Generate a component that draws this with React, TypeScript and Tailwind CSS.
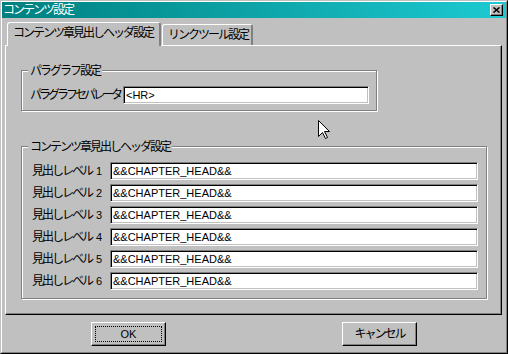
import React from "react";

const face = "font-['Liberation_Sans','Noto_Sans_CJK_JP',sans-serif]";

// sunken edit box, win9x style
function Field({ value, w }: { value: string; w: string }) {
  return (
    <div
      className={`${w} flex h-[18px] items-center overflow-hidden whitespace-nowrap border border-[#808080] border-r-white border-b-white bg-white pl-[2px] text-[11px] leading-none text-black shadow-[inset_1px_1px_0_#000,inset_-1px_-1px_0_#c0c0c0]`}
    >
      {value}
    </div>
  );
}

function Button({ children, focused }: { children: React.ReactNode; focused?: boolean }) {
  return (
    <div className="flex h-[24px] w-[75px] border border-white border-r-black border-b-black p-[3px] shadow-[inset_-1px_-1px_0_#808080]">
      <div
        className={`flex flex-1 items-center justify-center border ${
          focused ? "border-dotted border-black" : "border-transparent"
        }`}
      >
        {children}
      </div>
    </div>
  );
}

function Group({
  title,
  w,
  h,
  className,
  children,
}: {
  title: string;
  w: string;
  h: string;
  className: string;
  children: React.ReactNode;
}) {
  return (
    <div
      className={`${w} ${h} ${className} relative border border-[#808080] shadow-[inset_1px_1px_0_#fff,1px_1px_0_#fff]`}
    >
      <span className="absolute -top-[7px] left-[6px] bg-[#c0c0c0] px-[2px] text-[12px] leading-[14px] tracking-[-2px]">
        {title}
      </span>
      {children}
    </div>
  );
}

const levels = [1, 2, 3, 4, 5, 6];

export default function App() {
  return (
    <div
      className={`${face} relative h-[354px] w-[508px] select-none border border-[#c0c0c0] border-r-black border-b-black bg-[#c0c0c0] text-black`}
    >
      <div className="flex h-full flex-col border border-white border-r-[#808080] border-b-[#808080]">
        {/* title bar */}
        <div className="flex h-[16px] shrink-0 items-center justify-between bg-linear-to-r from-[#008080] to-[#1ccad2]">
          <span className="pl-[1px] text-[12px] leading-[16px] tracking-[-2px] text-white">
            コンテンツ設定
          </span>
          <div className="mr-[3px] flex h-[12px] w-[13px] items-center justify-center border border-white border-r-black border-b-black bg-[#c0c0c0] shadow-[inset_-1px_-1px_0_#808080]">
            <svg width="7" height="6" viewBox="0 0 7 6">
              <path d="M0.5 0.5 L6.5 5.5 M6.5 0.5 L0.5 5.5" stroke="#000" strokeWidth="1.6" />
            </svg>
          </div>
        </div>

        {/* tabs */}
        <div className="flex h-[27px] shrink-0 items-end pl-[5px] text-[12px] leading-[14px]">
          <div className="relative z-10 -mb-px h-[24px] w-[154px] rounded-t-[3px] border-t border-l border-r-2 border-white border-r-[#808080] bg-[#c0c0c0] pt-[3px] pl-[5px] tracking-[-2px]">
            コンテンツ章見出しヘッダ設定
          </div>
          <div className="ml-[1px] h-[21px] w-[91px] rounded-t-[3px] border-t border-l border-r-2 border-white border-r-[#808080] pt-[3px] pl-[5px] tracking-[-2px]">
            リンクツール設定
          </div>
        </div>

        {/* tab panel */}
        <div className="ml-[3px] h-[270px] w-[497px] shrink-0 border border-white border-r-black border-b-black shadow-[inset_-1px_-1px_0_#808080]">
          <Group title="パラグラフ設定" w="w-[356px]" h="h-[41px]" className="mt-[24px] ml-[15px]">
            <div className="flex items-center pt-[15px] pl-[8px]">
              <span className="w-[93px] text-[12px] leading-[14px] tracking-[-3px]">パラグラフセパレータ</span>
              <Field value="<HR>" w="w-[246px]" />
            </div>
          </Group>

          <Group
            title="コンテンツ章見出しヘッダ設定"
            w="w-[466px]"
            h="h-[153px]"
            className="mt-[35px] ml-[15px]"
          >
            <div className="flex flex-col gap-[4px] pt-[15px] pl-[10px]">
              {levels.map((n) => (
                <div key={n} className="flex items-center">
                  <span className="flex w-[78px] items-center text-[12px] leading-[14px]">
                    <span className="tracking-[-2px]">見出しレベル</span>
                    <span className="ml-[4px] text-[11px]">{n}</span>
                  </span>
                  <Field value="&&CHAPTER_HEAD&&" w="w-[368px]" />
                </div>
              ))}
            </div>
          </Group>
        </div>

        {/* buttons */}
        <div className="mt-[7px] flex gap-[176px] pl-[89px] text-[11px] leading-none">
          <Button focused>OK</Button>
          <Button>
            <span className="text-[12px] tracking-[-2px]">キャンセル</span>
          </Button>
        </div>
      </div>

      {/* mouse pointer */}
      <svg className="absolute top-[119px] left-[317px]" width="12" height="19" viewBox="0 0 12 19">
        <path
          d="M0.5 0.5 L0.5 16.5 L4.5 12.5 L7.5 18.5 L9.5 17.5 L6.5 11.5 L11.5 11.5 Z"
          fill="#fff"
          stroke="#000"
          strokeWidth="1"
        />
      </svg>
    </div>
  );
}
